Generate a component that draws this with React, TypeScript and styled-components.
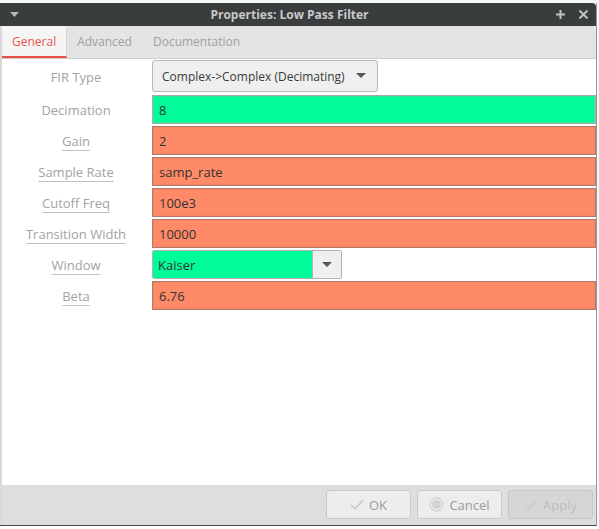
import styled, { createGlobalStyle } from "styled-components";

const GlobalStyle = createGlobalStyle`
  html, body {
    margin: 0;
    padding: 0;
    background: #ffffff;
    font-family: "Open Sans", "Noto Sans", sans-serif;
  }
`;

const Screen = styled.div`
  width: 599px;
  height: 529px;
  overflow: hidden;
  display: flex;
  flex-direction: column;
  background: #f7f7f9;
`;

const Window = styled.div`
  margin-top: 3px;
  width: 597px;
  height: 523px;
  flex-shrink: 0;
  display: flex;
  flex-direction: column;
  border-right: 1px solid #9a9a9a;
  border-bottom: 1px solid #4a4a4a;
  box-sizing: border-box;
`;

const TitleBar = styled.div`
  height: 23px;
  flex-shrink: 0;
  background: #3a3d3e;
  border-top-right-radius: 4px;
  display: flex;
  align-items: center;
  padding: 0 8px 0 10px;
`;

const Title = styled.div`
  flex: 1;
  text-align: center;
  color: #c8c8c8;
  font-weight: bold;
  font-size: 12px;
  padding-left: 4px;
`;

const TitleButtons = styled.div`
  display: flex;
  gap: 14px;
  align-items: center;
`;

const Body = styled.div`
  flex: 1;
  display: flex;
  flex-direction: column;
  border-left: 2px solid #d9d9d9;
  background: #ffffff;
`;

const TabBar = styled.div`
  height: 33px;
  flex-shrink: 0;
  background: #e4e4e4;
  border-bottom: 1px solid #cfcfcf;
  display: flex;
  box-sizing: border-box;
`;

const Tab = styled.div<{ $active?: boolean }>`
  padding: 0 10px;
  display: flex;
  align-items: center;
  font-size: 12px;
  color: ${(p) => (p.$active ? "#e9554f" : "#a0a0a0")};
  background: ${(p) => (p.$active ? "#f5f5f5" : "transparent")};
  border-bottom: 2px solid ${(p) => (p.$active ? "#ea4f4a" : "transparent")};
  border-right: 1px solid ${(p) => (p.$active ? "#d6d6d6" : "transparent")};
`;

const Form = styled.div`
  flex: 1;
  display: grid;
  grid-template-columns: 150px 1fr;
  grid-template-rows: 33px;
  grid-auto-rows: 29px;
  row-gap: 2px;
  align-content: start;
  padding-top: 1px;
`;

const Label = styled.div<{ $link?: boolean }>`
  display: flex;
  align-items: center;
  justify-content: center;
  font-size: 13px;
  color: #a3a3a3;
  text-decoration: ${(p) => (p.$link ? "underline" : "none")};
  text-decoration-color: #c2c2c2;
  text-underline-offset: 4px;
  padding-right: 2px;
`;

const Field = styled.div<{ $ok?: boolean }>`
  display: flex;
  align-items: center;
  padding-left: 6px;
  font-size: 13px;
  color: #333333;
  background: ${(p) => (p.$ok ? "#00fc99" : "#ff8a68")};
  border: 1px solid ${(p) => (p.$ok ? "#a9a9a9" : "#b5796a")};
  box-shadow: inset 0 0 0 1px ${(p) => (p.$ok ? "#36e79d" : "#f18766")};
  box-sizing: border-box;
`;

const ComboRow = styled.div`
  display: flex;
  align-items: flex-start;
`;

const Combo = styled.div`
  width: 226px;
  height: 32px;
  box-sizing: border-box;
  display: flex;
  align-items: center;
  justify-content: space-between;
  padding: 0 11px 0 9px;
  background: #efefef;
  border: 1px solid #b8b8b8;
  border-radius: 3px;
  font-size: 12px;
  white-space: nowrap;
  color: #3a3a3a;
`;

const WindowCombo = styled.div`
  width: 190px;
  height: 29px;
  display: flex;
  border: 1px solid #b4b4b4;
  border-radius: 2px;
  box-sizing: border-box;
  overflow: hidden;
`;

const ComboValue = styled.div`
  flex: 1;
  display: flex;
  align-items: center;
  padding-left: 5px;
  background: #00fc99;
  border-right: 1px solid #b4b4b4;
  font-size: 13px;
  color: #333333;
`;

const ComboButton = styled.div`
  width: 28px;
  display: flex;
  align-items: center;
  justify-content: center;
  background: #efefef;
`;

const Footer = styled.div`
  height: 40px;
  flex-shrink: 0;
  background: #dedede;
  display: flex;
  justify-content: flex-end;
  align-items: flex-start;
  gap: 6px;
  padding: 5px 3px 0 0;
  box-sizing: border-box;
`;

const Button = styled.div<{ $disabled?: boolean }>`
  width: 85px;
  height: 29px;
  box-sizing: border-box;
  display: flex;
  align-items: center;
  justify-content: center;
  gap: 5px;
  font-size: 13px;
  color: ${(p) => (p.$disabled ? "#bdbdbd" : "#9b9b9b")};
  background: ${(p) => (p.$disabled ? "#d6d6d6" : "#ededed")};
  border: 1px solid ${(p) => (p.$disabled ? "#c6c6c6" : "#c9c9c9")};
  border-radius: 3px;
`;

const Below = styled.div`
  flex: 1;
  background: #ffffff;
`;

const Arrow = () => (
  <svg width="10" height="6" viewBox="0 0 10 6">
    <path d="M0 0 H10 L5 5 Z" fill="#555" />
  </svg>
);

const Check = ({ color }: { color: string }) => (
  <svg width="14" height="12" viewBox="0 0 14 12">
    <path d="M1 6 L5 10 L13 1" fill="none" stroke={color} strokeWidth="1.2" />
  </svg>
);

const CancelIcon = () => (
  <svg width="15" height="15" viewBox="0 0 15 15">
    <circle cx="7.5" cy="7.5" r="6.5" fill="none" stroke="#c8c8c8" strokeWidth="1" />
    <circle cx="7.5" cy="7.5" r="4.5" fill="#d2d2d2" />
  </svg>
);

const textFields = [
  { label: "Gain", value: "2" },
  { label: "Sample Rate", value: "samp_rate" },
  { label: "Cutoff Freq", value: "100e3" },
  { label: "Transition Width", value: "10000" },
];

function App() {
  return (
    <>
      <GlobalStyle />
      <Screen>
        <Window>
          <TitleBar>
            <svg width="9" height="5" viewBox="0 0 9 5">
              <path d="M0 0 H9 L4.5 5 Z" fill="#b8b8b8" />
            </svg>
            <Title>Properties: Low Pass Filter</Title>
            <TitleButtons>
              <svg width="9" height="9" viewBox="0 0 9 9">
                <path d="M4.5 0 V9 M0 4.5 H9" stroke="#c0c0c0" strokeWidth="2" />
              </svg>
              <svg width="9" height="9" viewBox="0 0 9 9">
                <path d="M0.5 0.5 L8.5 8.5 M8.5 0.5 L0.5 8.5" stroke="#c0c0c0" strokeWidth="2" />
              </svg>
            </TitleButtons>
          </TitleBar>
          <Body>
            <TabBar>
              <Tab $active>General</Tab>
              <Tab>Advanced</Tab>
              <Tab>Documentation</Tab>
            </TabBar>
            <Form>
              <Label>FIR Type</Label>
              <ComboRow>
                <Combo>
                  Complex-&gt;Complex (Decimating)
                  <Arrow />
                </Combo>
              </ComboRow>
              <Label>Decimation</Label>
              <Field $ok>8</Field>
              {textFields.map((f) => (
                <>
                  <Label $link key={f.label}>{f.label}</Label>
                  <Field key={f.label + "-v"}>{f.value}</Field>
                </>
              ))}
              <Label $link>Window</Label>
              <ComboRow>
                <WindowCombo>
                  <ComboValue>Kaiser</ComboValue>
                  <ComboButton>
                    <Arrow />
                  </ComboButton>
                </WindowCombo>
              </ComboRow>
              <Label $link>Beta</Label>
              <Field>6.76</Field>
            </Form>
            <Footer>
              <Button>
                <Check color="#c4c4c4" />
                OK
              </Button>
              <Button>
                <CancelIcon />
                Cancel
              </Button>
              <Button $disabled>
                <Check color="#cacaca" />
                Apply
              </Button>
            </Footer>
          </Body>
        </Window>
        <Below />
      </Screen>
    </>
  );
}

export default App;
